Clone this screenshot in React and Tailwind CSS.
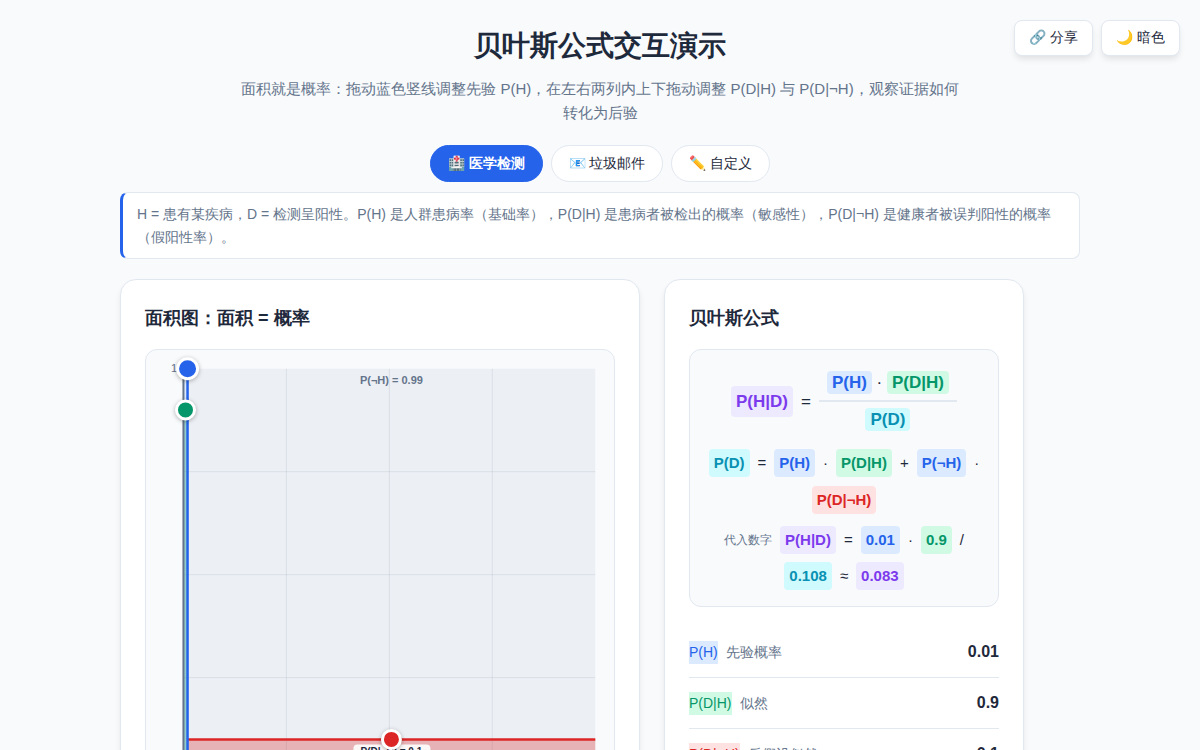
import { useState } from 'react'
import clsx from 'clsx'

const PRESETS = [
  {
    id: 'medical',
    icon: '🏥',
    label: '医学检测',
    prior: 0.01,
    likelihood: 0.9,
    falsePositive: 0.1,
    description:
      'H = 患有某疾病，D = 检测呈阳性。P(H) 是人群患病率（基础率），P(D|H) 是患病者被检出的概率（敏感性），P(D|¬H) 是健康者被误判阳性的概率（假阳性率）。',
  },
  {
    id: 'spam',
    icon: '📧',
    label: '垃圾邮件',
    prior: 0.4,
    likelihood: 0.7,
    falsePositive: 0.05,
    description: 'H = 垃圾邮件，D = 包含某关键词。P(H) 是垃圾邮件占比，P(D|H) 是垃圾邮件包含该词的概率。',
  },
  {
    id: 'custom',
    icon: '✏️',
    label: '自定义',
    prior: 0.5,
    likelihood: 0.5,
    falsePositive: 0.5,
    description: '自由调整先验与似然，观察后验概率如何变化。',
  },
]

const TONES = {
  blue: 'bg-blue-100 text-[#2563eb]',
  green: 'bg-[#d1fae5] text-[#059669]',
  red: 'bg-[#fee2e2] text-[#dc2626]',
  cyan: 'bg-[#cffafe] text-[#0891b2]',
  purple: 'bg-[#ede9fe] text-[#7c3aed]',
}

const format = (value) => String(Number(value.toFixed(3)))

const Chip = ({ tone, children }) => (
  <span className={clsx('rounded px-[5px] py-[2px] font-semibold', TONES[tone])}>{children}</span>
)

const Card = ({ title, className, children }) => (
  <section
    className={clsx('rounded-2xl border border-[#e2e8f0] bg-white p-6 shadow-[0_4px_6px_-1px_rgba(0,0,0,0.1)]', className)}
  >
    <h2 className="mb-4 text-[18px] leading-[29px] font-semibold">{title}</h2>
    {children}
  </section>
)

// Plot area inside the chart
const VIEW = 468
const LEFT = VIEW * 0.08
const TOP = VIEW * 0.04
const SIZE = VIEW * 0.88

const Handle = ({ cx, cy, r, fill }) => (
  <circle
    cx={cx}
    cy={cy}
    r={r}
    fill={fill}
    stroke="#fff"
    strokeWidth="3"
    className="cursor-pointer drop-shadow-[0_1px_2px_rgba(0,0,0,0.3)]"
  />
)

const AreaChart = ({ prior, likelihood, falsePositive }) => {
  const split = LEFT + prior * SIZE
  const right = LEFT + SIZE
  const bottom = TOP + SIZE
  const yTrue = bottom - likelihood * SIZE
  const yFalse = bottom - falsePositive * SIZE
  const midTrue = (LEFT + split) / 2
  const midFalse = (split + right) / 2

  return (
    <svg viewBox={`0 0 ${VIEW} ${VIEW}`} className="block w-full" role="img" aria-label="面积图">
      <rect x={LEFT} y={TOP} width={split - LEFT} height={SIZE} fill="#dbeafe" />
      <rect x={split} y={TOP} width={right - split} height={SIZE} fill="#eceff4" />
      <rect x={LEFT} y={yTrue} width={split - LEFT} height={bottom - yTrue} fill="#059669" fillOpacity="0.35" />
      <rect x={split} y={yFalse} width={right - split} height={bottom - yFalse} fill="#dc2626" fillOpacity="0.3" />

      {[0.25, 0.5, 0.75].map((t) => (
        <g key={t} stroke="#64748b" strokeOpacity="0.13">
          <line x1={LEFT + t * SIZE} x2={LEFT + t * SIZE} y1={TOP} y2={bottom} />
          <line x1={LEFT} x2={right} y1={TOP + t * SIZE} y2={TOP + t * SIZE} />
        </g>
      ))}

      <line x1={LEFT} x2={LEFT} y1={TOP} y2={bottom} stroke="#64748b" strokeWidth="2" />
      <line x1={LEFT} x2={right} y1={bottom} y2={bottom} stroke="#64748b" strokeWidth="2" />
      <line x1={split} x2={right} y1={yFalse} y2={yFalse} stroke="#dc2626" strokeWidth="2.5" />
      <line x1={LEFT} x2={split} y1={yTrue} y2={yTrue} stroke="#059669" strokeWidth="2.5" />
      <line x1={split} x2={split} y1={TOP} y2={bottom} stroke="#2563eb" strokeWidth="2.5" />

      <g fontSize="11" fill="#64748b">
        <text x="31" y="22" textAnchor="end">1</text>
        <text x="31" y="435" textAnchor="end">0</text>
        <text x={right} y="448" textAnchor="middle">1</text>
        <text x={midFalse} y="34" textAnchor="middle" fontWeight="600">
          P(¬H) = {format(1 - prior)}
        </text>
      </g>

      <rect x={midFalse - 38} y={yFalse + 5} width="77" height="19" rx="4" fill="#fff" fillOpacity="0.9" />
      <text x={midFalse} y={yFalse + 16} textAnchor="middle" fontSize="10" fontWeight="600" fill="#1e293b">
        P(D|¬H) = {format(falsePositive)}
      </text>

      <Handle cx={split} cy={TOP} r={10} fill="#2563eb" />
      <Handle cx={midTrue} cy={yTrue} r={9} fill="#059669" />
      <Handle cx={midFalse} cy={yFalse} r={9} fill="#dc2626" />
    </svg>
  )
}

const Formula = ({ prior, likelihood, evidence, posterior }) => (
  <div className="flex flex-col gap-3 rounded-xl border border-[#e2e8f0] bg-[#f8fafc] px-4 pt-[19px] pb-4 text-center text-[15px] leading-6">
    <div className="mb-1 flex items-center justify-center gap-2 text-[17px] leading-[27px]">
      <Chip tone="purple">P(H|D)</Chip>
      <span>=</span>
      <div className="flex flex-col">
        <div className="border-b-2 border-[#e2e8f0] px-2 pb-1">
          <Chip tone="blue">P(H)</Chip> · <Chip tone="green">P(D|H)</Chip>
        </div>
        <div className="px-2 pt-1">
          <Chip tone="cyan">P(D)</Chip>
        </div>
      </div>
    </div>
    <div className="flex flex-wrap items-center justify-center gap-x-2 gap-y-[9px]">
      <Chip tone="cyan">P(D)</Chip>
      <span>=</span>
      <Chip tone="blue">P(H)</Chip>
      <span>·</span>
      <Chip tone="green">P(D|H)</Chip>
      <span>+</span>
      <Chip tone="blue">P(¬H)</Chip>
      <span>·</span>
      <Chip tone="red">P(D|¬H)</Chip>
    </div>
    <div className="flex flex-wrap items-center justify-center gap-2">
      <span className="text-[12px] text-[#64748b]">代入数字</span>
      <Chip tone="purple">P(H|D)</Chip>
      <span>=</span>
      <Chip tone="blue">{format(prior)}</Chip>
      <span>·</span>
      <Chip tone="green">{format(likelihood)}</Chip>
      <span>/</span>
      <Chip tone="cyan">{format(evidence)}</Chip>
      <span>≈</span>
      <Chip tone="purple">{format(posterior)}</Chip>
    </div>
  </div>
)

const StatRow = ({ tone, symbol, label, value }) => (
  <div className="flex items-center justify-between border-b border-[#e2e8f0] py-3 last:border-b-0">
    <dt className="flex gap-2 text-[14px] leading-[23px] text-[#64748b]">
      <span className={TONES[tone]}>{symbol}</span>
      <span>{label}</span>
    </dt>
    <dd className="text-[16px] leading-[26px] font-semibold">{format(value)}</dd>
  </div>
)

const App = () => {
  const [activeId, setActiveId] = useState('medical')
  const preset = PRESETS.find((p) => p.id === activeId)
  const { prior, likelihood, falsePositive } = preset
  const evidence = prior * likelihood + (1 - prior) * falsePositive
  const posterior = (prior * likelihood) / evidence

  const toolButton =
    'cursor-pointer rounded-lg border border-[#e2e8f0] bg-white px-[14px] pt-[7px] pb-[9px] text-[14px] leading-[18px] shadow-[0_4px_6px_-1px_rgba(0,0,0,0.1)]'

  return (
    <div className="min-h-screen bg-[#f8fafc] px-5 pt-5 pb-10 font-['Liberation_Sans',sans-serif] text-[#1e293b]">
      {/* Floating toolbar */}
      <div className="absolute top-5 right-5 flex gap-2">
        <button type="button" className={toolButton}>🔗 分享</button>
        <button type="button" className={toolButton}>🌙 暗色</button>
      </div>

      <div className="mx-auto max-w-[960px]">
        <header className="text-center">
          <h1 className="mt-[3px] mb-[9px] text-[28px] leading-[45px] font-bold">贝叶斯公式交互演示</h1>
          <p className="mx-auto max-w-[720px] text-[15px] leading-6 text-[#64748b]">
            面积就是概率：拖动蓝色竖线调整先验 P(H)，在左右两列内上下拖动调整 P(D|H) 与 P(D|¬H)，观察证据如何转化为后验
          </p>
        </header>

        <nav className="mt-5 mb-[10px] flex flex-wrap justify-center gap-2">
          {PRESETS.map((p) => (
            <button
              key={p.id}
              type="button"
              onClick={() => setActiveId(p.id)}
              className={clsx(
                'cursor-pointer rounded-full border px-[17px] py-2 text-[14px] leading-[19px]',
                p.id === activeId
                  ? 'border-[#2563eb] bg-[#2563eb] font-semibold text-white'
                  : 'border-[#e2e8f0] bg-white'
              )}
            >
              {p.icon} {p.label}
            </button>
          ))}
        </nav>

        <p className="mb-5 rounded-lg border border-l-[3px] border-[#e2e8f0] border-l-[#2563eb] bg-white px-[14px] pt-[10px] pb-[9px] text-[14px] leading-[23px] text-[#64748b]">
          {preset.description}
        </p>

        <main className="flex flex-wrap items-start gap-6">
          <Card title="面积图：面积 = 概率" className="w-full max-w-[520px]">
            <div className="overflow-hidden rounded-xl border border-[#e2e8f0] bg-[#f8fafc]">
              <AreaChart prior={prior} likelihood={likelihood} falsePositive={falsePositive} />
            </div>
          </Card>

          <Card title="贝叶斯公式" className="w-full max-w-[360px]">
            <Formula prior={prior} likelihood={likelihood} evidence={evidence} posterior={posterior} />
            <dl className="mt-5">
              <StatRow tone="blue" symbol="P(H)" label="先验概率" value={prior} />
              <StatRow tone="green" symbol="P(D|H)" label="似然" value={likelihood} />
              <StatRow tone="red" symbol="P(D|¬H)" label="反假设似然" value={falsePositive} />
              <StatRow tone="cyan" symbol="P(D)" label="证据" value={evidence} />
              <StatRow tone="purple" symbol="P(H|D)" label="后验概率" value={posterior} />
            </dl>
          </Card>
        </main>
      </div>
    </div>
  )
}

export default App
